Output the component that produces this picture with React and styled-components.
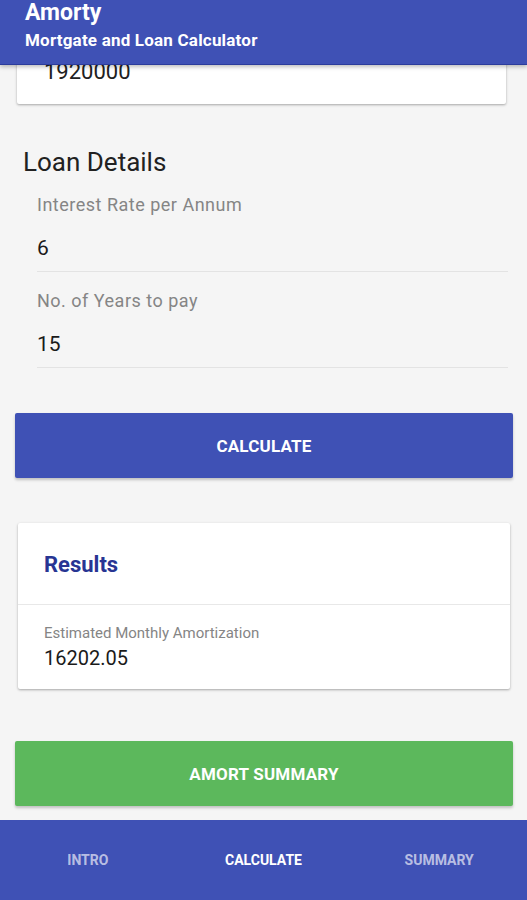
import React from 'react';
import styled, { createGlobalStyle } from 'styled-components';

const GlobalStyle = createGlobalStyle`
  html, body {
    margin: 0;
    padding: 0;
    background: #f5f5f5;
  }
  body {
    font-family: Roboto, 'Noto Sans', 'Liberation Sans', sans-serif;
    color: #212121;
  }
  * {
    box-sizing: border-box;
  }
`;

const Screen = styled.div`
  width: 527px;
  height: 900px;
  display: flex;
  flex-direction: column;
  overflow: hidden;
  background: #f5f5f5;
`;

const AppBar = styled.header`
  position: relative;
  z-index: 2;
  height: 65px;
  flex-shrink: 0;
  background: #3f51b5;
  border-bottom: 1px solid #2c3c9c;
  box-shadow: 0 2px 4px rgba(0, 0, 0, 0.25);
  padding: 0 25px;
  color: #fff;
  display: flex;
  flex-direction: column;
`;

const AppTitle = styled.div`
  font-size: 23px;
  font-weight: 700;
  line-height: 26px;
`;

const AppSubtitle = styled.div`
  font-size: 17px;
  font-weight: 700;
  line-height: 20px;
  margin-top: 4px;
  letter-spacing: 0.2px;
`;

const Content = styled.main`
  flex: 1;
  overflow: hidden;
  display: flex;
  flex-direction: column;
`;

const Card = styled.div`
  background: #fff;
  margin: ${(p) => p.$margin};
  border-radius: 2px;
  box-shadow: 0 1px 3px rgba(0, 0, 0, 0.22), 0 1px 2px rgba(0, 0, 0, 0.12);
`;

const AmountText = styled.div`
  padding: 15px 27px 20px;
  font-size: 22px;
  line-height: 24px;
`;

const SectionTitle = styled.h2`
  margin: 42px 0 0 23px;
  font-size: 26px;
  font-weight: 400;
  line-height: 32px;
`;

const FieldList = styled.div`
  display: flex;
  flex-direction: column;
  gap: 19px;
  margin: 17px 19px 0 37px;
`;

const Field = styled.div`
  display: flex;
  flex-direction: column;
  border-bottom: 1px solid #e3e3e3;
  padding-bottom: 11px;
`;

const FieldLabel = styled.div`
  font-size: 18px;
  line-height: 20px;
  letter-spacing: 0.5px;
  color: #858585;
`;

const FieldValue = styled.div`
  margin-top: 21px;
  font-size: 21px;
  line-height: 24px;
  color: #1a1a1a;
`;

const ActionButton = styled.button`
  display: block;
  margin: ${(p) => p.$margin};
  height: 65px;
  width: 498px;
  border: none;
  border-radius: 2px;
  background: ${(p) => p.$bg};
  color: #fff;
  font-family: inherit;
  font-size: 17px;
  font-weight: 700;
  letter-spacing: 0.2px;
  box-shadow: 0 2px 3px rgba(0, 0, 0, 0.22);
`;

const ResultsHead = styled.div`
  padding: 30px 26px 27px;
  font-size: 22px;
  font-weight: 700;
  line-height: 24px;
  color: #283593;
  border-bottom: 1px solid #e8e8e8;
`;

const ResultsBody = styled.div`
  padding: 19px 26px 19px;
`;

const ResultLabel = styled.div`
  font-size: 15px;
  line-height: 18px;
  color: #858585;
`;

const ResultValue = styled.div`
  margin-top: 4px;
  font-size: 20px;
  line-height: 24px;
  color: #1a1a1a;
`;

const BottomNav = styled.nav`
  height: 80px;
  flex-shrink: 0;
  background: #3f51b5;
  display: grid;
  grid-template-columns: repeat(3, 1fr);
  align-items: center;
`;

const NavTab = styled.div`
  text-align: center;
  font-size: 14px;
  font-weight: 700;
  color: ${(p) => (p.$active ? '#ffffff' : 'rgba(255, 255, 255, 0.65)')};
`;

const tabs = ['INTRO', 'CALCULATE', 'SUMMARY'];

const fields = [
  { label: 'Interest Rate per Annum', value: '6' },
  { label: 'No. of Years to pay', value: '15' },
];

export default function App() {
  return (
    <>
      <GlobalStyle />
      <Screen>
        <AppBar>
          <AppTitle>Amorty</AppTitle>
          <AppSubtitle>Mortgate and Loan Calculator</AppSubtitle>
        </AppBar>
        <Content>
          {/* list is scrolled, so the top of this card sits under the app bar */}
          <Card $margin="-20px 21px 0 17px">
            <AmountText>1920000</AmountText>
          </Card>

          <SectionTitle>Loan Details</SectionTitle>
          <FieldList>
            {fields.map((f) => (
              <Field key={f.label}>
                <FieldLabel>{f.label}</FieldLabel>
                <FieldValue>{f.value}</FieldValue>
              </Field>
            ))}
          </FieldList>

          <ActionButton $bg="#3f51b5" $margin="45px 0 0 15px">CALCULATE</ActionButton>

          <Card $margin="45px 17px 0 18px">
            <ResultsHead>Results</ResultsHead>
            <ResultsBody>
              <ResultLabel>Estimated Monthly Amortization</ResultLabel>
              <ResultValue>16202.05</ResultValue>
            </ResultsBody>
          </Card>

          <ActionButton $bg="#5cb85c" $margin="52px 0 0 15px">AMORT SUMMARY</ActionButton>
        </Content>
        <BottomNav>
          {tabs.map((t) => (
            <NavTab key={t} $active={t === 'CALCULATE'}>
              {t}
            </NavTab>
          ))}
        </BottomNav>
      </Screen>
    </>
  );
}
